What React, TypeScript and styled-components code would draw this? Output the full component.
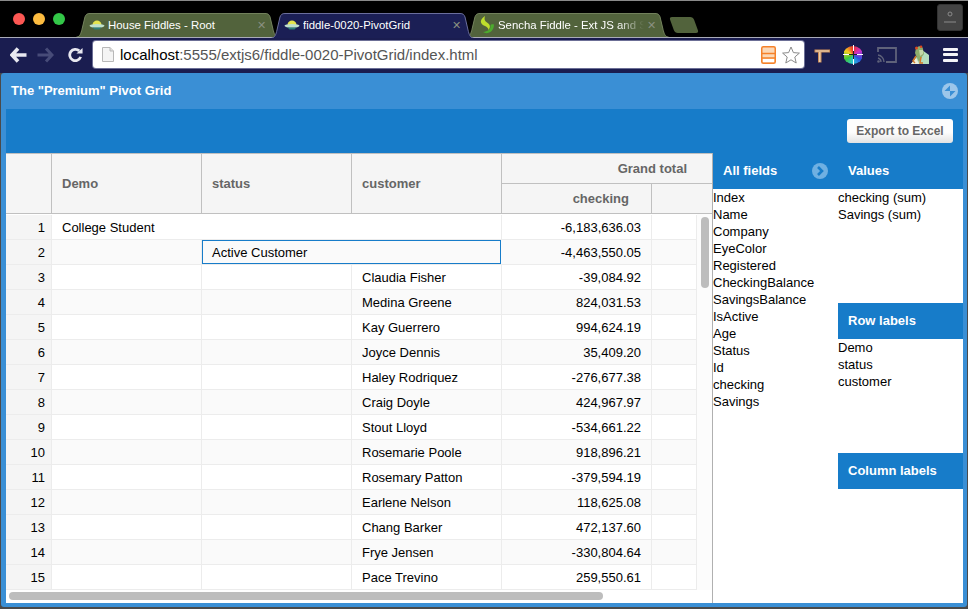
import React from 'react'
import styled, { createGlobalStyle } from 'styled-components'

const GlobalStyle = createGlobalStyle`
  html, body {
    margin: 0;
    padding: 0;
    background: #4a4a4a;
  }
  * {
    box-sizing: border-box;
  }
`

type RowData = {
  demo?: string
  status?: string
  customer?: string
  checking: string
}

const rows: RowData[] = [
  { demo: 'College Student', checking: '-6,183,636.03' },
  { status: 'Active Customer', checking: '-4,463,550.05' },
  { customer: 'Claudia Fisher', checking: '-39,084.92' },
  { customer: 'Medina Greene', checking: '824,031.53' },
  { customer: 'Kay Guerrero', checking: '994,624.19' },
  { customer: 'Joyce Dennis', checking: '35,409.20' },
  { customer: 'Haley Rodriquez', checking: '-276,677.38' },
  { customer: 'Craig Doyle', checking: '424,967.97' },
  { customer: 'Stout Lloyd', checking: '-534,661.22' },
  { customer: 'Rosemarie Poole', checking: '918,896.21' },
  { customer: 'Rosemary Patton', checking: '-379,594.19' },
  { customer: 'Earlene Nelson', checking: '118,625.08' },
  { customer: 'Chang Barker', checking: '472,137.60' },
  { customer: 'Frye Jensen', checking: '-330,804.64' },
  { customer: 'Pace Trevino', checking: '259,550.61' },
]

const allFields = ['Index', 'Name', 'Company', 'EyeColor', 'Registered', 'CheckingBalance', 'SavingsBalance', 'IsActive', 'Age', 'Status', 'Id', 'checking', 'Savings']

const TAB_SHAPE = 'M0.5 25 C4 25 5 21 6 17 L9 4 C10 1.5 11 0.5 14 0.5 H189 C192 0.5 193 1.5 194 4 L197 17 C198 21 199 25 202.5 25'

const Saucer = () => (
  <svg width="16" height="12" viewBox="0 0 16 12">
    <path d="M3.5 6 C3.5 0 12.5 0 12.5 6 Z" fill="#e4e44e" />
    <ellipse cx="8" cy="6.8" rx="7.5" ry="1.9" fill="#bfe0cc" />
    <path d="M3.5 8.4 H12.5 L10.5 10.6 H5.5 Z" fill="#2f7f78" />
  </svg>
)

const SenchaLeaf = () => (
  <svg width="16" height="18" viewBox="0 0 16 18">
    <path d="M6 0 C0 4 1 8 6 10 C8 11 9.5 12 9.5 14 C12 11 11 8 8 6.5 C5.5 5 5 3 6 0 Z" fill="#bede2c" />
    <path d="M15 8.5 C12 8 11 9 11.5 11 C11 13.5 9 15.5 4 16 C8 19 15 16 15 8.5 Z" fill="#4cab2e" />
  </svg>
)

const Frog = () => (
  <svg width="20" height="20" viewBox="0 0 20 20">
    <path d="M1 19 L12 5 L19 10 V19 Z" fill="#b4dfbe" />
    <path d="M1 19 L6 13 L9 19 Z" fill="#eef0dc" />
    <path d="M6 3 C9 0 13 1 13 4 L14 9 L11 13 L9 17 L7 13 L5 8 Z" fill="#8fae6c" />
    <path d="M9 5 L13 5 L13 9 L10 11 Z" fill="#c4d8a8" />
    <circle cx="6.5" cy="3" r="1.5" fill="#d8481f" />
    <circle cx="11" cy="1.8" r="1.3" fill="#d8481f" />
    <path d="M6 11 L3 16 L5 18 M11 12 L10 18 L13 18" stroke="#d47a2a" strokeWidth="1.5" fill="none" />
  </svg>
)

const BrowserTab = ({ active, title, fade, icon }: { active?: boolean; title: string; fade?: boolean; icon: React.ReactNode }) => (
  <Tab $active={active}>
    <TabShape viewBox="0 0 203 25" preserveAspectRatio="none">
      <path d={TAB_SHAPE} fill={active ? '#1b1f55' : '#52633c'} stroke={active ? '#6a6e9c' : '#76855f'} />
    </TabShape>
    <TabIcon>{icon}</TabIcon>
    <TabTitle $fade={fade}>{title}</TabTitle>
    <TabClose>✕</TabClose>
  </Tab>
)

export default function App() {
  return (
    <>
      <GlobalStyle />
      <Page>
        <TabStrip>
          <Lights>
            <Light $color="#fc5753" />
            <Light $color="#fdbc40" />
            <Light $color="#33c748" />
          </Lights>
          <BrowserTab title="House Fiddles - Root" icon={<Saucer />} />
          <BrowserTab active title="fiddle-0020-PivotGrid" icon={<Saucer />} />
          <BrowserTab fade title="Sencha Fiddle - Ext JS and S" icon={<SenchaLeaf />} />
          <NewTab />
          <ProfileButton>
            <svg width="14" height="14" viewBox="0 0 14 14">
              <circle cx="7" cy="4" r="2" fill="none" stroke="#8a8a8a" />
              <path d="M1 12 H13" stroke="#8a8a8a" />
            </svg>
          </ProfileButton>
        </TabStrip>
        <NavBar>
          <NavIcons>
            <svg width="17" height="16" viewBox="0 0 17 16">
              <path d="M8 1.5 L2 8 L8 14.5 M3 8 H16.5" fill="none" stroke="#e8e8f0" strokeWidth="3.6" />
            </svg>
            <svg width="17" height="16" viewBox="0 0 17 16">
              <path d="M9 1.5 L15 8 L9 14.5 M14 8 H0.5" fill="none" stroke="#474b78" strokeWidth="3" />
            </svg>
            <svg width="15" height="16" viewBox="0 0 16 16">
              <path d="M13.5 10 A6 6 0 1 1 12 3.6" fill="none" stroke="#e8e8f0" strokeWidth="3" />
              <path d="M9 6.5 H15.5 V0.5 Z" fill="#e8e8f0" />
            </svg>
          </NavIcons>
          <Omnibox>
            <svg width="12" height="15" viewBox="0 0 12 15">
              <path d="M0.5 0.5 H8 L11.5 4 V14.5 H0.5 Z" fill="#f4f4f4" stroke="#b8b8b8" />
              <path d="M8 0.5 V4 H11.5" fill="#e0e0e0" stroke="#b8b8b8" />
            </svg>
            <Url>
              localhost<UrlRest>:5555/extjs6/fiddle-0020-PivotGrid/index.html</UrlRest>
            </Url>
            <svg width="15" height="18" viewBox="0 0 15 18">
              <rect x="0.75" y="0.75" width="13.5" height="16.5" rx="1.5" fill="#fbd9b8" stroke="#f5822a" strokeWidth="1.5" />
              <path d="M1 7.5 H14 M1 12 H14" stroke="#f5822a" strokeWidth="1.5" />
              <rect x="2" y="13" width="11" height="3" fill="#fff" />
            </svg>
            <svg width="18" height="18" viewBox="0 0 18 18">
              <path d="M9 1 L11.4 6.6 L17.4 7.1 L12.8 11 L14.2 17 L9 13.8 L3.8 17 L5.2 11 L0.6 7.1 L6.6 6.6 Z" fill="#fff" stroke="#8a8a8a" />
            </svg>
          </Omnibox>
          <Extensions>
            <svg width="16" height="16" viewBox="0 0 16 16">
              <path d="M0.5 2.5 H16 V5.5 H7.5 V15.5 H4 V5.5 H0.5 Z" fill="#c98c58" />
              <path d="M1.5 4 H15 M5.8 5 V15" stroke="#f2dcc0" strokeWidth="1.2" />
            </svg>
            <ColorWheel />
            <svg width="20" height="16" viewBox="0 0 20 16">
              <path d="M1 5 V1 H19 V15 H9" fill="none" stroke="#5f627a" strokeWidth="1.8" />
              <path d="M1 8 A7 7 0 0 1 7 15 M1 11 A4 4 0 0 1 4 15" fill="none" stroke="#5f627a" strokeWidth="1.4" />
              <circle cx="1.5" cy="14.5" r="1.3" fill="#5f627a" />
            </svg>
            <Frog />
            <MenuIcon>
              <MenuBar />
              <MenuBar />
              <MenuBar />
            </MenuIcon>
          </Extensions>
        </NavBar>
        <Panel>
          <PanelHeader>
            <PanelTitle>The "Premium" Pivot Grid</PanelTitle>
            <svg width="16" height="16" viewBox="0 0 16 16">
              <circle cx="8" cy="8" r="8" fill="#9cc6ea" />
              <path d="M8 8 L8 2.5 L2.5 8 Z M8 8 L13.5 8 L8 13.5 Z" fill="#3a8fd5" />
            </svg>
          </PanelHeader>
          <PanelBody>
            <TopBar>
              <ExportButton>Export to Excel</ExportButton>
            </TopBar>
            <Main>
              <Grid>
                <GridHead>
                  <HeadCell $w={46} />
                  <HeadCell $w={150}><HeadText>Demo</HeadText></HeadCell>
                  <HeadCell $w={150}><HeadText>status</HeadText></HeadCell>
                  <HeadCell $w={150}><HeadText>customer</HeadText></HeadCell>
                  <HeadGroup>
                    <GroupTitle>Grand total</GroupTitle>
                    <GroupCols>
                      <SubHead>checking</SubHead>
                      <SubHeadRest />
                    </GroupCols>
                  </HeadGroup>
                </GridHead>
                <GridScroll>
                  <Rows>
                    {rows.map((row, i) => (
                      <Row key={i} $alt={i % 2 === 1}>
                        <RowNum>{i + 1}</RowNum>
                        {row.demo && <Cell $w={450}>{row.demo}</Cell>}
                        {row.status && (
                          <>
                            <Cell $w={150} />
                            <FocusCell>{row.status}</FocusCell>
                          </>
                        )}
                        {row.customer && (
                          <>
                            <Cell $w={150} />
                            <Cell $w={150} />
                            <Cell $w={150}>{row.customer}</Cell>
                          </>
                        )}
                        <NumCell>{row.checking}</NumCell>
                        <Cell $w={45} />
                      </Row>
                    ))}
                  </Rows>
                  <VTrack>
                    <VThumb />
                  </VTrack>
                </GridScroll>
                <HTrack>
                  <HThumb />
                </HTrack>
              </Grid>
              <Side>
                <FieldsColumn>
                  <SectionHead>
                    All fields
                    <CollapseIcon viewBox="0 0 16 16">
                      <circle cx="8" cy="8" r="8" fill="#6fb0e2" />
                      <path d="M6 4 L10 8 L6 12" fill="none" stroke="#177cc9" strokeWidth="2.6" />
                    </CollapseIcon>
                  </SectionHead>
                  <FieldList>
                    {allFields.map(f => <Field key={f}>{f}</Field>)}
                  </FieldList>
                </FieldsColumn>
                <ZonesColumn>
                  <Zone>
                    <SectionHead>Values</SectionHead>
                    <FieldList>
                      <Field>checking (sum)</Field>
                      <Field>Savings (sum)</Field>
                    </FieldList>
                  </Zone>
                  <Zone>
                    <SectionHead>Row labels</SectionHead>
                    <FieldList>
                      <Field>Demo</Field>
                      <Field>status</Field>
                      <Field>customer</Field>
                    </FieldList>
                  </Zone>
                  <Zone>
                    <SectionHead>Column labels</SectionHead>
                  </Zone>
                </ZonesColumn>
              </Side>
            </Main>
          </PanelBody>
        </Panel>
      </Page>
    </>
  )
}

const Page = styled.div`
  width: 968px;
  height: 609px;
  display: flex;
  flex-direction: column;
  overflow: hidden;
  font-family: "Liberation Sans", Arial, sans-serif;
  background: #4a4a4a;
`

const TabStrip = styled.div`
  height: 38px;
  flex: none;
  display: flex;
  align-items: flex-end;
  background: #000;
  border-top: 1px solid #8a8a8a;
  padding-left: 13px;
  border-bottom: 1px solid #a9abb8;
`

const Lights = styled.div`
  display: flex;
  gap: 8px;
  align-self: center;
  margin-right: 11px;
`

const Light = styled.span<{ $color: string }>`
  width: 12px;
  height: 12px;
  border-radius: 50%;
  background: ${p => p.$color};
`

const Tab = styled.div<{ $active?: boolean }>`
  position: relative;
  z-index: ${p => (p.$active ? 2 : 1)};
  width: 203px;
  height: ${p => (p.$active ? 25 : 24)}px;
  margin: 0 -8px ${p => (p.$active ? -1 : 0)}px 0;
  padding: 0 13px ${p => (p.$active ? 1 : 0)}px 13px;
  display: flex;
  align-items: center;
  gap: 3px;
  color: #fff;
  font-size: 11.4px;
`

const TabShape = styled.svg`
  position: absolute;
  inset: 0;
  width: 100%;
  height: 100%;
`

const TabIcon = styled.span`
  position: relative;
  width: 16px;
  flex: none;
  display: flex;
  align-items: center;
`

const TabTitle = styled.span<{ $fade?: boolean }>`
  position: relative;
  flex: 1;
  min-width: 0;
  white-space: nowrap;
  overflow: hidden;
  ${p => p.$fade && 'mask-image: linear-gradient(to right, #000 82%, transparent 100%);'}
`

const TabClose = styled.span`
  position: relative;
  font-size: 11px;
  color: #8a9080;
`

const NewTab = styled.div`
  width: 24px;
  height: 16px;
  margin: 0 0 4px 11px;
  background: #52633c;
  transform: skewX(20deg);
  border-radius: 3px;
`

const ProfileButton = styled.div`
  width: 26px;
  height: 27px;
  margin: 0 5px 4px auto;
  align-self: center;
  border-radius: 3px;
  background: #444;
  border: 1px solid #333;
  display: flex;
  align-items: center;
  justify-content: center;
`

const NavBar = styled.div`
  height: 35px;
  flex: none;
  display: flex;
  align-items: center;
  background: #1a1d50;
  padding: 0 10px 2px 10px;
`

const NavIcons = styled.div`
  width: 83px;
  flex: none;
  display: flex;
  align-items: center;
  gap: 10px;
  svg:last-child {
    margin-left: 4px;
  }
`

const Omnibox = styled.div`
  width: 711px;
  height: 27px;
  flex: none;
  display: flex;
  align-items: center;
  gap: 6px;
  padding: 0 4px 0 8px;
  background: #fff;
  border-radius: 3px;
  box-shadow: 0 0 0 1px #6c6f96;
  svg:first-child {
    margin-left: 1px;
    margin-right: 0;
  }
`

const Url = styled.span`
  flex: 1;
  font-size: 15px;
  color: #000;
  white-space: nowrap;
`

const UrlRest = styled.span`
  color: #555;
`

const Extensions = styled.div`
  flex: 1;
  display: flex;
  align-items: center;
  justify-content: space-between;
  padding-left: 10px;
`

const ColorWheel = styled.span`
  position: relative;
  width: 20px;
  height: 18px;
  background: conic-gradient(#e8302a, #d030c8, #2a50e0, #28c8d8, #3ec83a, #f5d020, #e8302a);
  background-size: 18px 18px;
  background-position: center;
  background-repeat: no-repeat;
  border-radius: 50%;
  &::before {
    content: '';
    position: absolute;
    left: 9.5px;
    top: -1px;
    bottom: -1px;
    width: 1px;
    background: linear-gradient(#fff 30%, #222 30% 70%, #fff 70%);
  }
  &::after {
    content: '';
    position: absolute;
    top: 8.5px;
    left: 0;
    right: 0;
    height: 1px;
    background: linear-gradient(to right, #fff 30%, #222 30% 70%, #fff 70%);
  }
`

const MenuIcon = styled.div`
  display: flex;
  flex-direction: column;
  gap: 2.5px;
  width: 15px;
`

const MenuBar = styled.span`
  height: 3px;
  background: #f4f4f8;
  border-radius: 1px;
`

const Panel = styled.div`
  flex: 1;
  min-height: 0;
  margin: 0 1px 2px;
  display: flex;
  flex-direction: column;
  background: #3a8fd5;
  border-radius: 3px;
`

const PanelHeader = styled.div`
  height: 36px;
  flex: none;
  display: flex;
  align-items: center;
  justify-content: space-between;
  padding: 0 9px 0 10px;
`

const PanelTitle = styled.span`
  font-size: 13px;
  font-weight: bold;
  color: #fff;
  margin-bottom: 2px;
`

const PanelBody = styled.div`
  flex: 1;
  min-height: 0;
  margin: 0 4px 4px 5px;
  display: flex;
  flex-direction: column;
  background: #fff;
`

const TopBar = styled.div`
  height: 44px;
  flex: none;
  display: flex;
  align-items: center;
  justify-content: flex-end;
  padding-right: 10px;
  background: #177cc9;
`

const ExportButton = styled.div`
  width: 106px;
  height: 24px;
  display: flex;
  align-items: center;
  justify-content: center;
  font-size: 12px;
  font-weight: bold;
  color: #666;
  border-radius: 3px;
  background: linear-gradient(#fdfdfd 55%, #e2e2e2);
`

const Main = styled.div`
  flex: 1;
  min-height: 0;
  display: flex;
`

const Grid = styled.div`
  width: 707px;
  flex: none;
  display: flex;
  flex-direction: column;
  border-right: 1px solid #b0b0b0;
  background: #fff;
`

const GridHead = styled.div`
  height: 61px;
  flex: none;
  display: flex;
  background: #f5f5f5;
  border-top: 1px solid #c0c0c0;
  border-bottom: 1px solid #c0c0c0;
`

const HeadCell = styled.div<{ $w: number }>`
  width: ${p => p.$w}px;
  flex: none;
  display: flex;
  align-items: center;
  padding-left: 10px;
  border-right: 1px solid #c0c0c0;
`

const HeadText = styled.span`
  font-size: 13px;
  font-weight: bold;
  color: #666;
`

const HeadGroup = styled.div`
  flex: 1;
  display: flex;
  flex-direction: column;
`

const GroupTitle = styled.div`
  height: 30px;
  flex: none;
  display: flex;
  align-items: center;
  justify-content: flex-end;
  padding-right: 25px;
  font-size: 13px;
  font-weight: bold;
  color: #666;
  border-bottom: 1px solid #c0c0c0;
`

const GroupCols = styled.div`
  flex: 1;
  display: flex;
`

const SubHead = styled.div`
  width: 150px;
  flex: none;
  display: flex;
  align-items: center;
  justify-content: flex-end;
  padding-right: 22px;
  font-size: 13px;
  font-weight: bold;
  color: #666;
  border-right: 1px solid #c0c0c0;
`

const SubHeadRest = styled.div`
  flex: 1;
`

const GridScroll = styled.div`
  flex: 1;
  min-height: 0;
  display: flex;
  background: #fcfcfc;
`

const Rows = styled.div`
  width: 691px;
  flex: none;
  padding-top: 1px;
  background: #fff;
`

const Row = styled.div<{ $alt: boolean }>`
  height: 25px;
  display: flex;
  background: ${p => (p.$alt ? '#fafafa' : '#fff')};
  border-bottom: 1px solid #ececec;
`

const RowNum = styled.div`
  width: 46px;
  flex: none;
  display: flex;
  align-items: center;
  justify-content: flex-end;
  padding-right: 6px;
  font-size: 13px;
  color: #000;
  background: #f5f5f5;
  border-right: 1px solid #ececec;
`

const Cell = styled.div<{ $w: number }>`
  width: ${p => p.$w}px;
  flex: none;
  display: flex;
  align-items: center;
  padding-left: 10px;
  font-size: 13px;
  color: #000;
  border-right: 1px solid #ececec;
`

const FocusCell = styled.div`
  width: 299px;
  flex: none;
  margin-right: 1px;
  display: flex;
  align-items: center;
  padding-left: 9px;
  font-size: 13px;
  color: #000;
  border: 1px solid #177cc9;
`

const NumCell = styled.div`
  width: 150px;
  flex: none;
  display: flex;
  align-items: center;
  justify-content: flex-end;
  padding-right: 10px;
  font-size: 13px;
  color: #000;
  border-right: 1px solid #ececec;
`

const VTrack = styled.div`
  flex: 1;
  padding: 3px 3px 0 4px;
`

const VThumb = styled.div`
  height: 71px;
  border-radius: 4px;
  background: #bdbdbd;
`

const HTrack = styled.div`
  height: 13px;
  flex: none;
  padding: 2px 0 0 3px;
  background: #fff;
`

const HThumb = styled.div`
  width: 594px;
  height: 8px;
  border-radius: 4px;
  background: #bdbdbd;
`

const Side = styled.div`
  flex: 1;
  display: flex;
  background: #fff;
`

const FieldsColumn = styled.div`
  width: 125px;
  flex: none;
`

const ZonesColumn = styled.div`
  flex: 1;
`

const Zone = styled.div`
  height: 150px;
`

const SectionHead = styled.div`
  position: relative;
  height: 36px;
  display: flex;
  align-items: center;
  padding: 0 0 2px 10px;
  font-size: 13px;
  font-weight: bold;
  color: #fff;
  background: #177cc9;
`

const CollapseIcon = styled.svg`
  position: absolute;
  right: 10px;
  top: 10px;
  width: 16px;
  height: 16px;
`

const FieldList = styled.div``

const Field = styled.div`
  height: 17px;
  line-height: 17px;
  font-size: 13px;
  color: #000;
`
